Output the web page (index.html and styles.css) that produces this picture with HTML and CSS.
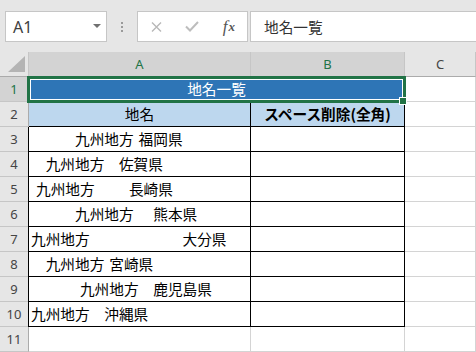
FILE: index.html
```html
<!DOCTYPE html>
<html lang="ja">
<head>
    <meta charset="UTF-8">
    <title>地名一覧</title>
    <link rel="stylesheet" href="styles.css">
</head>
<body>
    <!-- Formula bar -->
    <div class="formula-bar">
        <div class="name-box">
            <span class="name-text">A1</span>
            <span class="name-arrow"></span>
        </div>
        <div class="grip">
            <span></span><span></span><span></span>
        </div>
        <div class="fx-buttons">
            <span class="fx-btn">
                <svg width="11" height="10" viewBox="0 0 11 10"><path d="M1 0.5 L10 9.5 M10 0.5 L1 9.5" stroke="#b8b8b8" stroke-width="1.4" fill="none"/></svg>
            </span>
            <span class="fx-btn">
                <svg width="14" height="11" viewBox="0 0 14 11"><path d="M1 5.5 L5 9.5 L13 1" stroke="#bdbdbd" stroke-width="2" fill="none"/></svg>
            </span>
            <span class="fx-btn fx-label">f<small>x</small></span>
        </div>
        <div class="formula-input">地名一覧</div>
    </div>

    <!-- Sheet -->
    <div class="sheet">
        <div class="hd corner"><span class="corner-tri"></span></div>
        <div class="hd col sel">A</div>
        <div class="hd col sel">B</div>
        <div class="hd col">C</div>

        <div class="hd row sel">1</div>
        <div class="cell title">地名一覧</div>
        <div class="cell"></div>

        <div class="hd row">2</div>
        <div class="cell ruled head">地名</div>
        <div class="cell ruled head bold">スペース削除(全角)</div>
        <div class="cell"></div>

        <div class="hd row">3</div>
        <div class="cell ruled left">　　　九州地方 福岡県</div>
        <div class="cell ruled"></div>
        <div class="cell"></div>

        <div class="hd row">4</div>
        <div class="cell ruled left">　九州地方　佐賀県</div>
        <div class="cell ruled"></div>
        <div class="cell"></div>

        <div class="hd row">5</div>
        <div class="cell ruled left"> 九州地方　　 長崎県</div>
        <div class="cell ruled"></div>
        <div class="cell"></div>

        <div class="hd row">6</div>
        <div class="cell ruled left">　　　九州地方　 熊本県</div>
        <div class="cell ruled"></div>
        <div class="cell"></div>

        <div class="hd row">7</div>
        <div class="cell ruled left">九州地方　　　　　　 大分県</div>
        <div class="cell ruled"></div>
        <div class="cell"></div>

        <div class="hd row">8</div>
        <div class="cell ruled left">　九州地方 宮崎県</div>
        <div class="cell ruled"></div>
        <div class="cell"></div>

        <div class="hd row">9</div>
        <div class="cell ruled left">　　　 九州地方　鹿児島県</div>
        <div class="cell ruled"></div>
        <div class="cell"></div>

        <div class="hd row">10</div>
        <div class="cell ruled left">九州地方　沖縄県</div>
        <div class="cell ruled"></div>
        <div class="cell"></div>

        <div class="hd row">11</div>
        <div class="cell"></div>
        <div class="cell"></div>
        <div class="cell"></div>

        <!-- Selection around A1:B1 -->
        <div class="selection"></div>
        <div class="fill-handle"></div>
    </div>
</body>
</html>
```

FILE: styles.css
```css
/* Basic reset */
* {
    margin: 0;
    padding: 0;
    box-sizing: border-box;
}
body {
    width: 476px;
    height: 352px;
    overflow: hidden;
    background: #e6e6e6;
    font-family: "Noto Sans CJK JP", sans-serif;
}
/* Formula bar */
.formula-bar {
    display: flex;
    align-items: flex-start;
    height: 52px;
    padding: 11px 0 0 5px;
    background: #e6e6e6;
}
.name-box {
    position: relative;
    width: 102px;
    height: 31px;
    background: #fff;
    border: 1px solid #c6c6c6;
    display: flex;
    align-items: center;
    padding-left: 7px;
}
.name-text {
    font-family: "Noto Sans", sans-serif;
    font-size: 16px;
    color: #404040;
}
.name-arrow {
    position: absolute;
    left: 87px;
    top: 12px;
    border-left: 4px solid transparent;
    border-right: 4px solid transparent;
    border-top: 4px solid #707070;
}
.grip {
    width: 30px;
    height: 31px;
    display: flex;
    flex-direction: column;
    align-items: center;
    justify-content: center;
    gap: 2px;
}
.grip span {
    width: 2px;
    height: 2px;
    background: #9a9a9a;
}
.fx-buttons {
    width: 111px;
    height: 31px;
    background: #fff;
    border: 1px solid #c6c6c6;
    display: flex;
    margin-right: 2px;
}
.fx-btn {
    flex: 1;
    display: flex;
    align-items: center;
    justify-content: center;
}
.fx-label {
    font-family: "Liberation Serif", serif;
    font-style: italic;
    font-size: 17px;
    color: #555;
    padding-top: 1px;
}
.fx-label small {
    font-size: 13px;
    margin-left: 1px;
    font-weight: bold;
}
.formula-input {
    flex: 1;
    height: 31px;
    margin-right: -2px;
    background: #fff;
    border: 1px solid #c6c6c6;
    padding-left: 13px;
    font-size: 14.67px;
    line-height: 29px;
    color: #333;
}
/* Sheet grid */
.sheet {
    position: relative;
    display: grid;
    grid-template-columns: 29px 222px 154px 71px;
    grid-auto-rows: 25px;
    background: #fff;
}
.hd {
    background: #e6e6e6;
    border-right: 1px solid #c6c6c6;
    border-bottom: 1px solid #c6c6c6;
    font-family: "Noto Sans", sans-serif;
    font-size: 13px;
    color: #444;
    display: flex;
    align-items: center;
    justify-content: center;
}
.hd.col {
    border-bottom-color: #ababab;
}
.hd.row {
    border-right-color: #ababab;
}
.hd.sel {
    background: #d3d3d3;
    color: #217346;
}
.corner {
    position: relative;
    border-bottom-color: #ababab;
}
.corner-tri {
    position: absolute;
    right: 3px;
    bottom: 4px;
    border-left: 17px solid transparent;
    border-bottom: 16px solid #b4b4b4;
}
.cell {
    border-right: 1px solid #d4d4d4;
    border-bottom: 1px solid #d4d4d4;
    font-size: 14.67px;
    line-height: 24px;
    color: #000;
    white-space: pre;
    word-spacing: 1.7px;
    overflow: hidden;
}
.cell.ruled {
    border-right-color: #000;
    border-bottom-color: #000;
}
.sheet > .cell.ruled.left,
.sheet > .cell.ruled.head:nth-child(7) {
    box-shadow: -1px 0 0 #000;
}
.cell.left {
    padding-left: 2px;
}
.cell.head {
    background: #bdd7ee;
    text-align: center;
}
.cell.bold {
    font-weight: bold;
}
.cell.title {
    grid-column: span 2;
    background: #2e75b6;
    color: #fff;
    text-align: center;
}
/* Selection overlay */
.selection {
    position: absolute;
    left: 27px;
    top: 24px;
    width: 379px;
    height: 27px;
    border: 3px solid #217346;
    box-shadow: inset 0 0 0 1px #fff;
}
.fill-handle {
    position: absolute;
    left: 399px;
    top: 45px;
    width: 8px;
    height: 8px;
    background: #217346;
    border: 1px solid #fff;
}
```
